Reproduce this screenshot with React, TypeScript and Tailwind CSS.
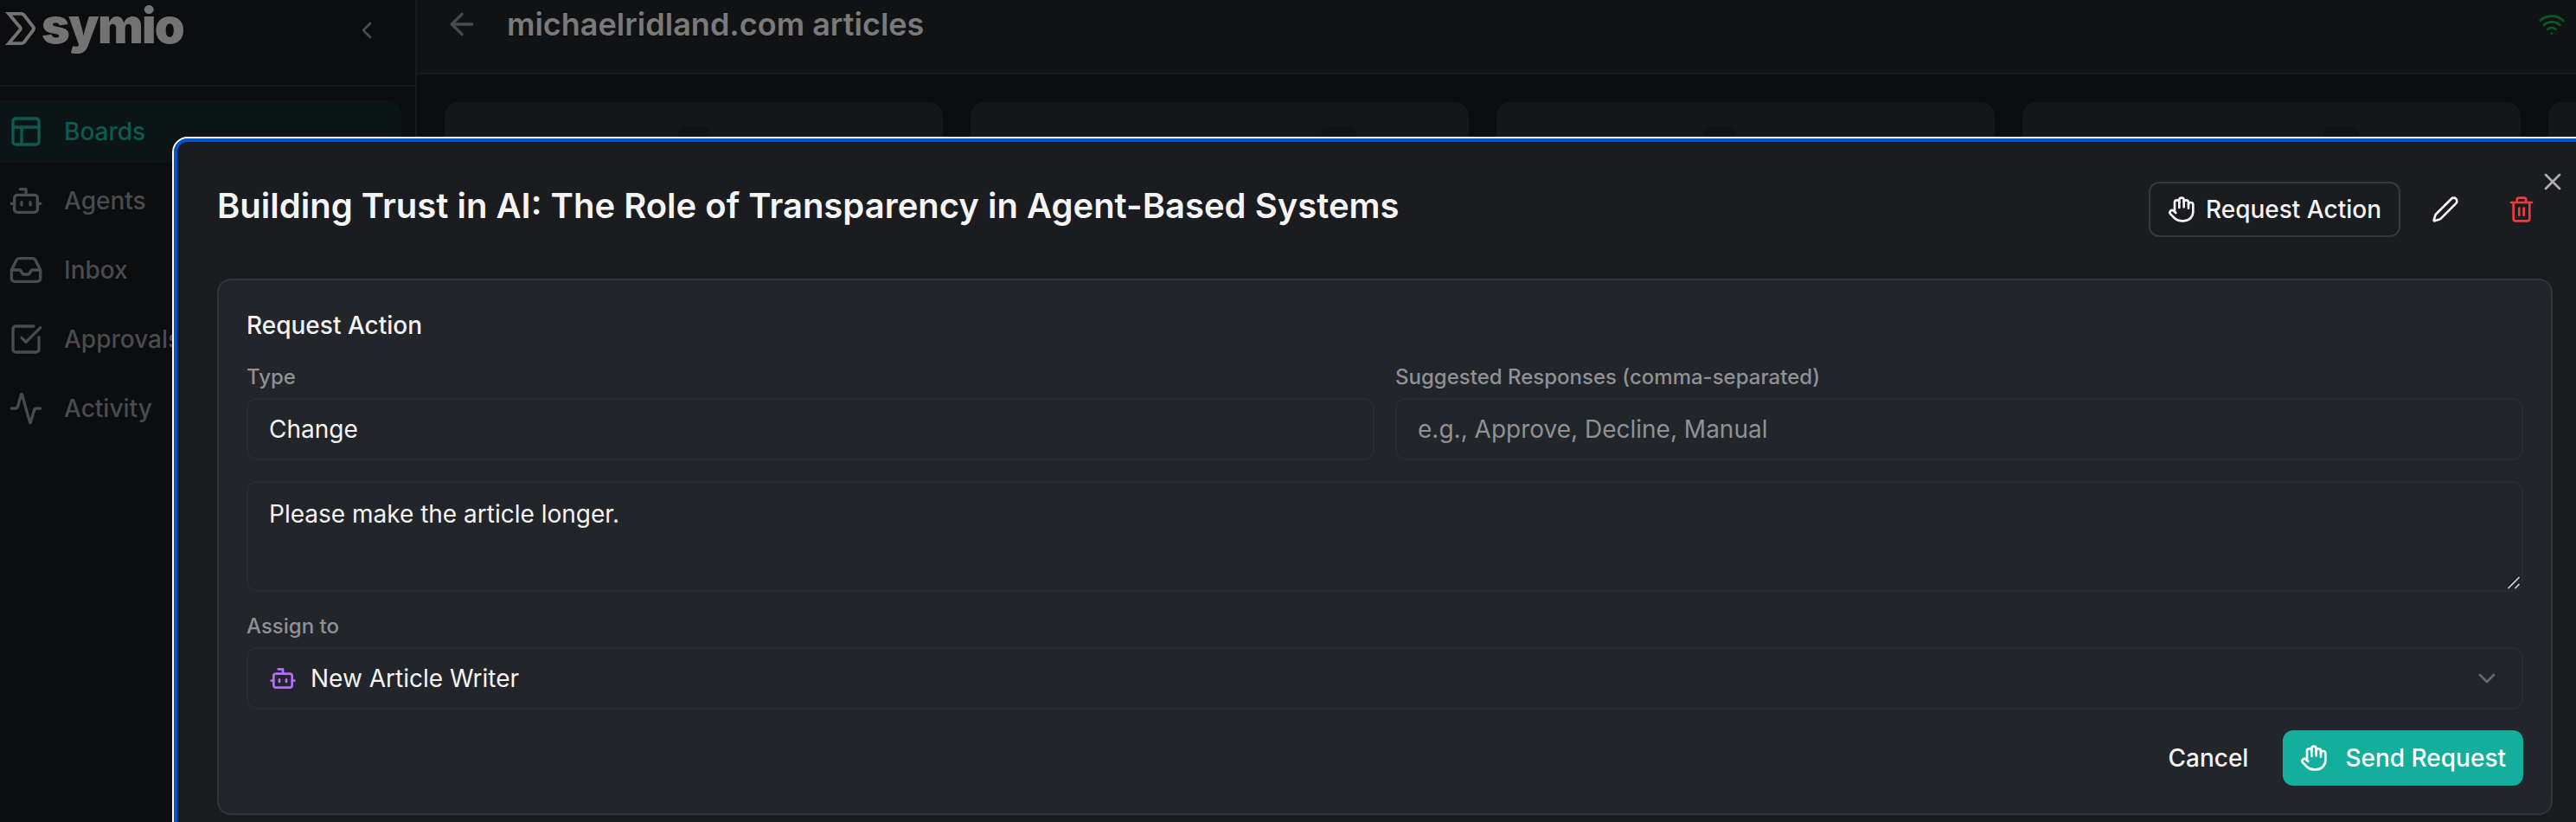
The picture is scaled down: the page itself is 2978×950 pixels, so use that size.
import {
	Activity,
	ArrowLeft,
	Bot,
	ChevronDown,
	ChevronLeft,
	Hand,
	Inbox,
	PanelsTopLeft,
	Pen,
	SquareCheckBig,
	Trash2,
	Wifi,
	X,
} from "lucide-react";
import clsx from "clsx";

const navItems = [
	{ text: "Boards", icon: PanelsTopLeft, active: true },
	{ text: "Agents", icon: Bot },
	{ text: "Inbox", icon: Inbox },
	{ text: "Approvals", icon: SquareCheckBig },
	{ text: "Activity", icon: Activity },
];

// count badge placement for each board column
const columns = [
	"ml-[270px] w-9",
	"ml-[405px] w-[41px]",
	"ml-[240px] w-9",
	"ml-[348px] w-[41px]",
	"ml-[348px] w-[41px]",
];

const Logo = () => (
	<div className="flex items-start">
		<svg className="mt-[13px] ml-1.5 h-10 w-9" viewBox="0 0 36 40" fill="none">
			<path
				d="M4 2.8H18.5Q20.5 2.8 21.8 4.5L32.3 18Q33.8 20 32.3 22L21.8 35.7Q20.5 37.2 18.5 37.2H4L17.2 21.5Q18.4 20 17.2 18.5Z"
				stroke="currentColor"
				strokeWidth="3.8"
			/>
		</svg>
		<span className="ml-1.5 text-[56px] leading-[61px] font-black tracking-[-1.8px]">
			symio
		</span>
	</div>
);

const SideBar = () => (
	<aside className="flex w-[482px] shrink-0 flex-col border-r-2 border-[#18191b] bg-[#0b0d0e]">
		<div className="flex h-[100px] items-start justify-between border-b-2 border-[#18191b] text-[#737373]">
			<Logo />
			<ChevronLeft className="mt-[19px] mr-10 size-8 text-[#4a4b4e]" />
		</div>
		<nav className="mt-4 flex flex-col gap-2 pr-4">
			{navItems.map((item) => (
				<a
					key={item.text}
					className={clsx(
						"flex h-[72px] items-center gap-6 rounded-r-[16px] pl-2.5 text-[28px] font-medium",
						item.active ? "bg-[#0c1516] text-[#0b5b51]" : "text-[#4a4b4e]",
					)}
				>
					<item.icon className="size-10" />
					{item.text}
				</a>
			))}
		</nav>
	</aside>
);

const Board = () => (
	<main className="flex min-w-0 flex-1 flex-col bg-[#0b0d0e]">
		<header className="flex h-[86px] shrink-0 items-start border-b-2 border-[#18191b] bg-[#111214]">
			<ArrowLeft className="mt-2 ml-8 size-10 text-[#4a4b4e]" />
			<h1 className="ml-8 text-[36px] leading-[56px] font-semibold text-[#7a7a7a]">
				michaelridland.com articles
			</h1>
			<Wifi className="mt-3 mr-3 ml-auto size-8 text-[#075a24]" />
		</header>
		<div className="mt-8 ml-8 flex gap-8 overflow-hidden">
			{columns.map((badge, index) => (
				<section
					key={index}
					className="h-80 w-[576px] shrink-0 rounded-[16px] bg-[#131719]"
				>
					<div className={clsx("mt-7 h-10 rounded-[8px] bg-[#111214]", badge)} />
				</section>
			))}
		</div>
	</main>
);

const Label = ({ text }: { text: string }) => (
	<span className="text-[24px] leading-8 font-medium text-[#8f9195]">{text}</span>
);

const field = "flex rounded-[12px] border-2 border-[#282b2f] px-6 text-[28px]";

const RequestForm = () => (
	<section className="flex w-[2700px] flex-col gap-6 rounded-[16px] border-2 border-[#343539] bg-[#22252a] p-8">
		<h3 className="text-[28px] leading-10 font-medium">Request Action</h3>
		<div className="grid grid-cols-2 gap-6">
			<div className="flex flex-col gap-2">
				<Label text="Type" />
				<div className={clsx(field, "h-[72px] items-center")}>Change</div>
			</div>
			<div className="flex flex-col gap-2">
				<Label text="Suggested Responses (comma-separated)" />
				<div className={clsx(field, "h-[72px] items-center text-[#8f9195]")}>
					e.g., Approve, Decline, Manual
				</div>
			</div>
		</div>
		<div className={clsx(field, "relative h-32 py-4 leading-10")}>
			Please make the article longer.
			<svg
				className="absolute right-px bottom-px size-4"
				viewBox="0 0 16 16"
				fill="none"
			>
				<path d="M1.5 14.5L14.5 1.5M9.5 14.5L14.5 9.5" stroke="#111214" strokeWidth="4" />
				<path d="M1.5 15L14.5 2M9.5 15L14.5 10" stroke="#c4c4c4" strokeWidth="1.8" />
			</svg>
		</div>
		<div className="flex flex-col gap-2">
			<Label text="Assign to" />
			<div className={clsx(field, "h-[72px] items-center gap-4")}>
				<Bot className="size-8 text-[#b66dff]" />
				New Article Writer
				<ChevronDown className="ml-auto size-8 text-[#66686c]" />
			</div>
		</div>
		<div className="flex justify-end gap-4 text-[28px] font-medium">
			<button className="h-16 px-6">Cancel</button>
			<button className="flex h-16 items-center gap-5 rounded-[12px] bg-[#14ae9c] px-5 text-white">
				<Hand className="size-8" />
				Send Request
			</button>
		</div>
	</section>
);

const ArticleDialog = () => (
	<div
		role="dialog"
		className="absolute top-[158px] left-[199px] h-[900px] w-[2900px] rounded-[18px] border-2 border-white bg-[#0055cc]"
	>
		<div className="size-full rounded-[16px] border-4 border-[#0055cc] bg-[#1b1c20] pl-[46px]">
			<div className="flex h-[158px] w-[2700px] items-start pt-[46px] text-[28px] font-medium">
				<h2 className="mr-auto text-[40px] leading-[56px] font-semibold">
					Building Trust in AI: The Role of Transparency in Agent-Based Systems
				</h2>
				<div className="flex items-center gap-4">
					<button className="flex h-16 items-center gap-3 rounded-[12px] border-2 border-[#37383c] px-5">
						<Hand className="size-8" />
						Request Action
					</button>
					<button className="flex h-16 w-[72px] items-center justify-center">
						<Pen className="size-8" />
					</button>
					<button className="flex h-16 w-[72px] items-center justify-center text-[#ef3b3b]">
						<Trash2 className="size-8" />
					</button>
				</div>
			</div>
			<RequestForm />
		</div>
		<X className="absolute top-[34px] left-[2734px] size-8 text-[#afafb0]" />
	</div>
);

const App = () => (
	<div className="relative flex h-[950px] w-[2978px] overflow-hidden bg-[#0b0d0e] font-['Inter',sans-serif] text-[#f4f4f4]">
		<SideBar />
		<Board />
		<ArticleDialog />
	</div>
);

export default App;
